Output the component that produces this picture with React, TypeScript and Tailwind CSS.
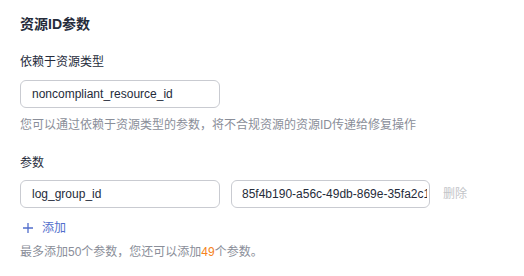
const inputCls =
  'h-[28px] border border-[#c9cbd1] rounded-[6px] text-[12px] text-[#252b3a] bg-white outline-none'

export default function App() {
  const font = { fontFamily: '"Liberation Sans", "Noto Sans CJK SC", sans-serif' }
  return (
    <div className="bg-white w-[524px] h-[276px] pl-5 pt-[14px] text-[#252b3a]" style={font}>
      <h2 className="text-[14px] font-bold leading-[20px]">资源ID参数</h2>

      <div className="mt-[19px] text-[12px] leading-[18px]">依赖于资源类型</div>
      <input
        readOnly
        value="noncompliant_resource_id"
        className={'mt-[9px] block w-[200px] px-[11px] ' + inputCls}
        style={font}
      />
      <div className="mt-[8px] text-[12px] leading-[18px] text-[#8a8e99]">
        您可以通过依赖于资源类型的参数，将不合规资源的资源ID传递给修复操作
      </div>

      <div className="mt-[20px] text-[12px] leading-[18px]">参数</div>
      <div className="mt-[8px] flex items-center">
        <input readOnly value="log_group_id" className={'w-[200px] px-[11px] ' + inputCls} style={font} />
        <input
          readOnly
          value="85f4b190-a56c-49db-869e-35fa2c1b7e43"
          className={'ml-[11px] w-[199px] pl-[10px] pr-[2px] ' + inputCls}
          style={font}
        />
        <span className="ml-[13px] text-[12px] text-[#c2c4c8]">删除</span>
      </div>

      <div className="mt-[11px] flex items-center text-[12px] leading-[18px] text-[#526ecc]">
        <svg width="12" height="12" viewBox="0 0 12 12" className="ml-[2px]">
          <path d="M6 1v10M1 6h10" stroke="#526ecc" strokeWidth="1.3" fill="none" />
        </svg>
        <span className="ml-[8px]">添加</span>
      </div>
      <div className="mt-[6px] text-[12px] leading-[18px] text-[#8a8e99]">
        最多添加50个参数，您还可以添加<span className="text-[#f58220]">49</span>个参数。
      </div>
    </div>
  )
}
